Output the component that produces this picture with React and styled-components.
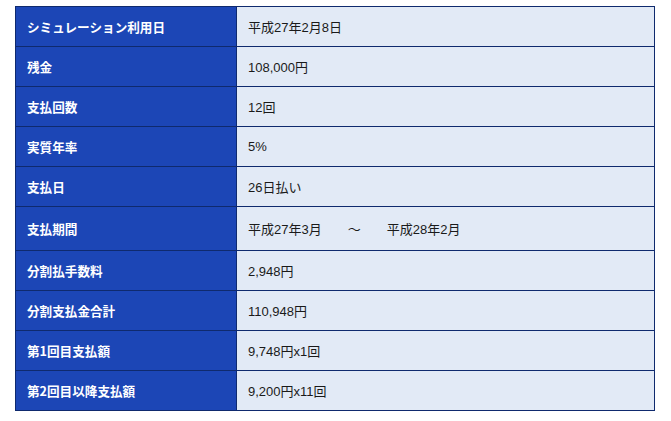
import styled, { createGlobalStyle } from "styled-components";

const rows = [
  { label: "シミュレーション利用日", value: "平成27年2月8日" },
  { label: "残金", value: "108,000円" },
  { label: "支払回数", value: "12回" },
  { label: "実質年率", value: "5%" },
  { label: "支払日", value: "26日払い" },
  { label: "支払期間", value: "平成27年3月　　〜　　平成28年2月", tall: true },
  { label: "分割払手数料", value: "2,948円" },
  { label: "分割支払金合計", value: "110,948円" },
  { label: "第1回目支払額", value: "9,748円x1回" },
  { label: "第2回目以降支払額", value: "9,200円x11回" },
];

export default function App() {
  return (
    <>
      <GlobalStyle />
      <Wrapper>
        <ResultTable>
          <tbody>
            {rows.map((row) => (
              <Row key={row.label} $tall={row.tall}>
                <Label>{row.label}</Label>
                <Value>{row.value}</Value>
              </Row>
            ))}
          </tbody>
        </ResultTable>
      </Wrapper>
    </>
  );
}

const GlobalStyle = createGlobalStyle`
  body {
    margin: 0;
    background: #fff;
    font-family: "Noto Sans CJK JP", "Liberation Sans", sans-serif;
  }
`;

const Wrapper = styled.div`
  padding: 6px 0 0 15px;
`;

const ResultTable = styled.table`
  width: 640px;
  border-collapse: collapse;
  border: 1px solid #0f2a6e;
`;

const Row = styled.tr`
  height: ${(p) => (p.$tall ? "44px" : "40px")};
`;

const Label = styled.th`
  width: 198px;
  padding: 0 11px;
  text-align: left;
  vertical-align: middle;
  background-color: #1c46b6;
  color: #fff;
  font-size: 12.6px;
  font-weight: bold;
  border: 1px solid #0f2a6e;
`;

const Value = styled.td`
  padding: 0 11px;
  vertical-align: middle;
  background-color: #e2eaf6;
  color: #1a1a1a;
  font-family: "Liberation Sans", "Noto Sans CJK JP", sans-serif;
  font-size: 13px;
  border: 1px solid #0f2a6e;
`;
